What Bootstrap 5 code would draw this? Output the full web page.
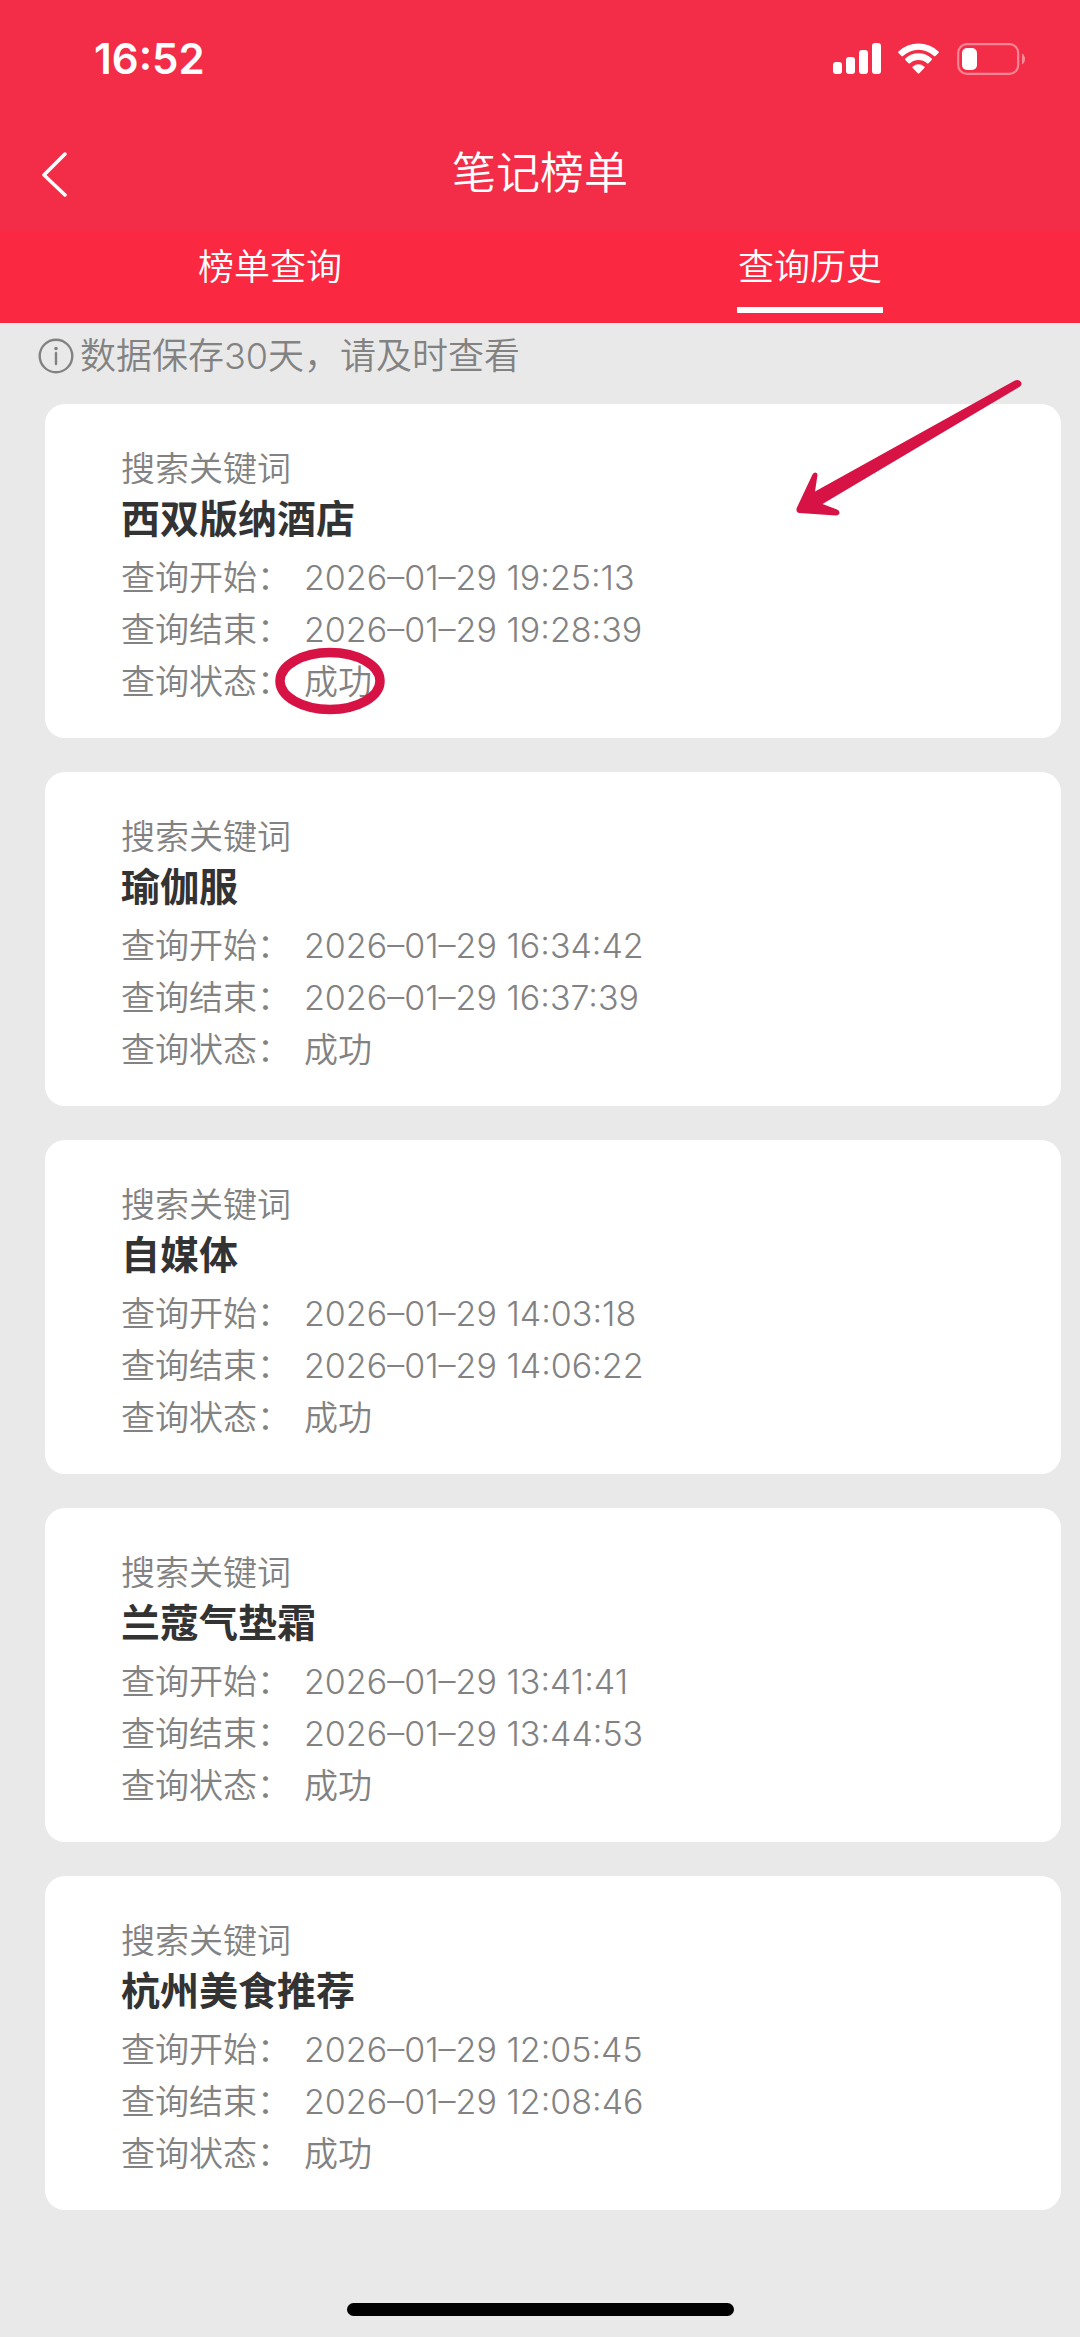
<!DOCTYPE html>
<html lang="zh-CN">
<head>
<meta charset="utf-8">
<meta name="viewport" content="width=device-width, initial-scale=1">
<title>笔记榜单</title>
<link href="https://cdn.jsdelivr.net/npm/bootstrap@5.3.0/dist/css/bootstrap.min.css" rel="stylesheet">
<style>
  body { background: #e9e9e9; color: #828282; font-family: Inter, "Noto Sans CJK SC", sans-serif; font-weight: 350; }
  .app-head { background: #f32d47; }
  .status-row { height: 118px; padding: 0 55px 0 94px; }
  .clock { font-size: 42px; font-weight: 600; line-height: 50px; }
  .status-icons { width: 192px; height: 32px; }
  .title-row { height: 113px; padding: 0 36px 4px; }
  .title-row h1 { font-size: 44px; font-weight: 350; line-height: 60px; }
  .side-slot { width: 40px; }
  .tab-strip { background: #fa2841; height: 92px; }
  .tab-strip .nav-link { color: #fff; font-size: 36px; line-height: 50px; padding: 11px 1px 15px; border-bottom: 6px solid transparent; border-radius: 0; }
  .tab-strip .nav-link.active { border-bottom-color: #fff; }
  .notice { font-size: 36px; line-height: 50px; padding: 8px 38px 23px; gap: 6px; }
  .records { gap: 34px; padding: 0 19px 0 45px; }
  .record { border: 0; border-radius: 20px; padding: 40px 76px 30px; color: inherit; font-size: 34px; }
  .record .caption-line { line-height: 50px; }
  .record h2 { font-size: 39px; font-weight: 700; line-height: 50px; color: #333; margin: 0 0 8px; }
  .record dl > div { line-height: 52px; gap: 13px; }
  .record dt { font-weight: inherit; }
  .hint-arrow { width: 228px; height: 140px; right: 38px; top: -26px; }
  .hint-ring { width: 110px; height: 68px; left: -29px; top: -9px; }
  .home-bar { width: 387px; height: 13px; border-radius: 7px; background: #000; margin-bottom: 21px; }
</style>
<script src="https://cdn.jsdelivr.net/npm/bootstrap@5.3.0/dist/js/bootstrap.bundle.min.js"></script>
</head>
<body class="min-vh-100 d-flex flex-column">
<header class="app-head text-white">
  <div class="status-row d-flex align-items-center justify-content-between">
    <span class="clock">16:52</span>
    <svg class="status-icons" viewBox="0 0 192 32" fill="#fff" role="img" aria-label="信号、无线网络、电池">
      <rect x="0" y="19" width="9" height="12" rx="3"/>
      <rect x="13" y="14" width="9" height="17" rx="3"/>
      <rect x="26" y="7" width="9" height="24" rx="3"/>
      <rect x="39" y="0" width="9" height="31" rx="3"/>
      <path d="M65.500 8.500Q64.800 9.200 65.500 10L68.500 13Q69.300 13.700 70 13A22.500 22.500 0 0 1 101 13Q101.700 13.700 102.500 13L105.500 10Q106.200 9.200 105.500 8.500A29 29 0 0 0 65.500 8.500Z"/>
      <path d="M72.300 15.500Q71.700 16.200 72.300 17L75.500 20.200Q76.300 20.900 77 20.200A13 13 0 0 1 94 20.200Q94.700 20.900 95.500 20.200L98.700 17Q99.300 16.200 98.700 15.500A19.500 19.500 0 0 0 72.300 15.500Z"/>
      <path d="M79.300 24.300Q79.300 23.800 79.800 23.400A9.500 9.500 0 0 1 91.200 23.400Q91.700 23.800 91.700 24.300Q91.700 24.700 91.300 25.100L86.300 30.200Q85.500 31 84.700 30.200L79.700 25.100Q79.300 24.700 79.300 24.300Z"/>
      <rect x="125.200" y="1.200" width="60" height="29.600" rx="8.500" fill="none" stroke="#fff" stroke-opacity=".42" stroke-width="2.200"/>
      <rect x="129" y="5" width="15" height="22" rx="5"/>
      <path d="M189 10.500Q192 12.500 192 16T189 21.500Z" fill-opacity=".45"/>
    </svg>
  </div>
  <div class="title-row d-flex align-items-center justify-content-between">
    <button type="button" class="btn p-0 border-0 side-slot d-flex" aria-label="返回">
      <svg width="40" height="48" viewBox="0 0 40 48" fill="none" stroke="#fff" stroke-width="3.500" stroke-linecap="round" stroke-linejoin="round"><path d="M29 5L8 26l21 20"/></svg>
    </button>
    <h1 class="m-0">笔记榜单</h1>
    <span class="side-slot"></span>
  </div>
  <nav class="tab-strip nav align-items-start">
    <div class="nav-item w-50 d-flex justify-content-center"><a class="nav-link" href="#query">榜单查询</a></div>
    <div class="nav-item w-50 d-flex justify-content-center"><a class="nav-link active" aria-current="page" href="#history">查询历史</a></div>
  </nav>
</header>
<main id="history">
  <p class="notice d-flex align-items-center m-0">
    <svg width="36" height="36" viewBox="0 0 36 36" fill="none" stroke="#828282" stroke-width="2.400" stroke-linecap="round" aria-hidden="true"><circle cx="18" cy="18" r="16.300"/><path d="M18 15v11"/><circle cx="18" cy="10.500" r="1.800" fill="#828282" stroke="none"/></svg>
    <span>数据保存30天，请及时查看</span>
  </p>
  <div class="records d-flex flex-column">
    <article class="card record">
      <div class="caption-line">搜索关键词</div>
      <h2>西双版纳酒店</h2>
      <dl class="m-0">
        <div class="d-flex"><dt>查询开始：</dt><dd class="m-0">2026–01–29 19:25:13</dd></div>
        <div class="d-flex"><dt>查询结束：</dt><dd class="m-0">2026–01–29 19:28:39</dd></div>
        <div class="d-flex"><dt>查询状态：</dt><dd class="m-0 position-relative">成功
          <svg class="hint-ring position-absolute" viewBox="0 0 110 68" fill="none" stroke="#d71345" stroke-width="9.500" aria-hidden="true"><ellipse cx="55" cy="34" rx="50" ry="28.500"/></svg></dd></div>
      </dl>
      <svg class="hint-arrow position-absolute" viewBox="0 0 228 140" fill="#d71345" aria-hidden="true"><path d="M219 3L20 113.500L22.500 97Q22.500 94.500 20.500 94.500Q18.500 94.500 17.500 96.500L1.500 130.500Q1 134.500 4.500 135L41 137.500Q44.500 137 44.500 134.500Q44.500 132.500 42 131.500L27.500 126L225 8.500Q227.500 6.500 226 4Q223.500 .500 219 3Z"/></svg>
    </article>
    <article class="card record">
      <div class="caption-line">搜索关键词</div>
      <h2>瑜伽服</h2>
      <dl class="m-0">
        <div class="d-flex"><dt>查询开始：</dt><dd class="m-0">2026–01–29 16:34:42</dd></div>
        <div class="d-flex"><dt>查询结束：</dt><dd class="m-0">2026–01–29 16:37:39</dd></div>
        <div class="d-flex"><dt>查询状态：</dt><dd class="m-0">成功</dd></div>
      </dl>
    </article>
    <article class="card record">
      <div class="caption-line">搜索关键词</div>
      <h2>自媒体</h2>
      <dl class="m-0">
        <div class="d-flex"><dt>查询开始：</dt><dd class="m-0">2026–01–29 14:03:18</dd></div>
        <div class="d-flex"><dt>查询结束：</dt><dd class="m-0">2026–01–29 14:06:22</dd></div>
        <div class="d-flex"><dt>查询状态：</dt><dd class="m-0">成功</dd></div>
      </dl>
    </article>
    <article class="card record">
      <div class="caption-line">搜索关键词</div>
      <h2>兰蔻气垫霜</h2>
      <dl class="m-0">
        <div class="d-flex"><dt>查询开始：</dt><dd class="m-0">2026–01–29 13:41:41</dd></div>
        <div class="d-flex"><dt>查询结束：</dt><dd class="m-0">2026–01–29 13:44:53</dd></div>
        <div class="d-flex"><dt>查询状态：</dt><dd class="m-0">成功</dd></div>
      </dl>
    </article>
    <article class="card record">
      <div class="caption-line">搜索关键词</div>
      <h2>杭州美食推荐</h2>
      <dl class="m-0">
        <div class="d-flex"><dt>查询开始：</dt><dd class="m-0">2026–01–29 12:05:45</dd></div>
        <div class="d-flex"><dt>查询结束：</dt><dd class="m-0">2026–01–29 12:08:46</dd></div>
        <div class="d-flex"><dt>查询状态：</dt><dd class="m-0">成功</dd></div>
      </dl>
    </article>
  </div>
</main>
<div class="home-bar mt-auto mx-auto"></div>
</body>
</html>
